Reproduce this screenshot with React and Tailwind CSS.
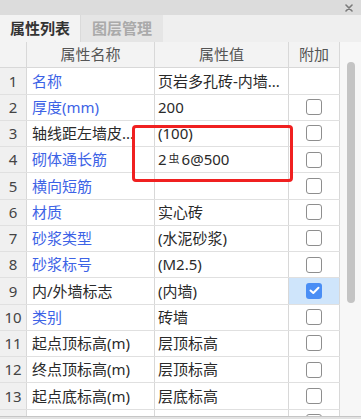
import React from 'react';

const rows = [
  { n: 1, name: '名称', blue: true, value: '页岩多孔砖-内墙...', cb: null },
  { n: 2, name: '厚度(mm)', blue: true, value: '200', cb: false },
  { n: 3, name: '轴线距左墙皮...', blue: false, value: '(100)', cb: false },
  { n: 4, name: '砌体通长筋', blue: true, value: 'steel', cb: false },
  { n: 5, name: '横向短筋', blue: true, value: '', cb: false },
  { n: 6, name: '材质', blue: true, value: '实心砖', cb: false },
  { n: 7, name: '砂浆类型', blue: true, value: '(水泥砂浆)', cb: false },
  { n: 8, name: '砂浆标号', blue: true, value: '(M2.5)', cb: false },
  { n: 9, name: '内/外墙标志', blue: false, value: '(内墙)', cb: true },
  { n: 10, name: '类别', blue: true, value: '砖墙', cb: false },
  { n: 11, name: '起点顶标高(m)', blue: false, value: '层顶标高', cb: false },
  { n: 12, name: '终点顶标高(m)', blue: false, value: '层顶标高', cb: false },
  { n: 13, name: '起点底标高(m)', blue: false, value: '层底标高', cb: false },
  { n: '', name: '', blue: false, value: '', cb: false },
];

function Checkbox({ checked }) {
  if (checked) {
    return (
      <span className="flex items-center justify-center w-[16px] h-[16px] rounded-[3px] bg-[#4a8ef5]">
        <svg width="11" height="9" viewBox="0 0 11 9">
          <path d="M1.5 4.5 L4.3 7 L9.5 1.8" fill="none" stroke="#fff" strokeWidth="2" strokeLinecap="round" strokeLinejoin="round" />
        </svg>
      </span>
    );
  }
  return <span className="block w-[16px] h-[16px] rounded-[3px] border-[1.5px] border-[#8e8e8e] bg-white" />;
}

function Value({ v }) {
  if (v === 'steel') {
    return (
      <span>
        2<span className="text-[11px] relative top-[-2px] mx-[2px]">虫</span>6@500
      </span>
    );
  }
  return <span>{v}</span>;
}

export default function App() {
  return (
    <div className="relative w-[361px] h-[419px] overflow-hidden bg-[#e2e2e2] text-[15px] text-[#333] font-['Noto_Sans','Noto_Sans_CJK_SC',sans-serif]">
      <div className="h-[15px] bg-[#dcdcdc] flex justify-end items-center pr-[8px]">
        <svg width="8" height="8" viewBox="0 0 8 8">
          <path d="M1 1 L7 7 M7 1 L1 7" stroke="#7a7a7a" strokeWidth="1.6" strokeLinecap="round" />
        </svg>
      </div>
      <div className="h-[27px] flex bg-[#efefef]">
        <div className="w-[80px] flex items-center justify-center font-bold bg-[#f3f3f3] text-[#333]">属性列表</div>
        <div className="w-[83px] flex items-center justify-center font-bold bg-[#e5e5e5] text-[#aaa] border-l border-[#dadada]">图层管理</div>
      </div>
      <div className="flex h-[375px] border-b border-[#c6c6c6] bg-white">
        <div className="w-[340px] overflow-hidden">
          <div className="grid grid-cols-[27px_128px_134px_51px] h-[26.25px] bg-[#f3f3f3] text-[#555] border-b border-[#d8d8d8]">
            <div className="border-r border-[#d8d8d8]" />
            <div className="flex items-center justify-center border-r border-[#d8d8d8]">属性名称</div>
            <div className="flex items-center justify-center border-r border-[#d8d8d8]">属性值</div>
            <div className="flex items-center justify-center border-r border-[#d8d8d8]">附加</div>
          </div>
          {rows.map((r, i) => (
            <div key={i} className="grid grid-cols-[27px_128px_134px_51px] h-[26.25px] border-b border-[#e0e0e0]">
              <div className="flex items-center justify-center bg-[#f0f0f0] text-[#444] border-r border-[#d8d8d8]">{r.n}</div>
              <div className={`flex items-center pl-[5px] whitespace-nowrap overflow-hidden border-r border-[#d8d8d8] ${r.blue ? 'text-[#3d63e6]' : 'text-[#2a2a2a]'}`}>{r.name}</div>
              <div className="flex items-center pl-[3px] whitespace-nowrap overflow-hidden text-[#2a2a2a] border-r border-[#d8d8d8]">
                <Value v={r.value} />
              </div>
              <div className={`flex items-center justify-center border-r border-[#d8d8d8] ${r.cb === true ? 'bg-[#cfe5fb]' : ''}`}>
                {r.cb !== null && <Checkbox checked={r.cb} />}
              </div>
            </div>
          ))}
        </div>
        <div className="w-[21px] bg-[#f7f7f7] pt-[20px] flex justify-center">
          <div className="w-[8px] h-[241px] rounded-full bg-[#c4c4c4] ml-[1px]" />
        </div>
      </div>
      <div className="absolute left-[132px] top-[125px] w-[161px] h-[57px] border-[3px] border-[#f02020] rounded-[4px]" />
    </div>
  );
}
